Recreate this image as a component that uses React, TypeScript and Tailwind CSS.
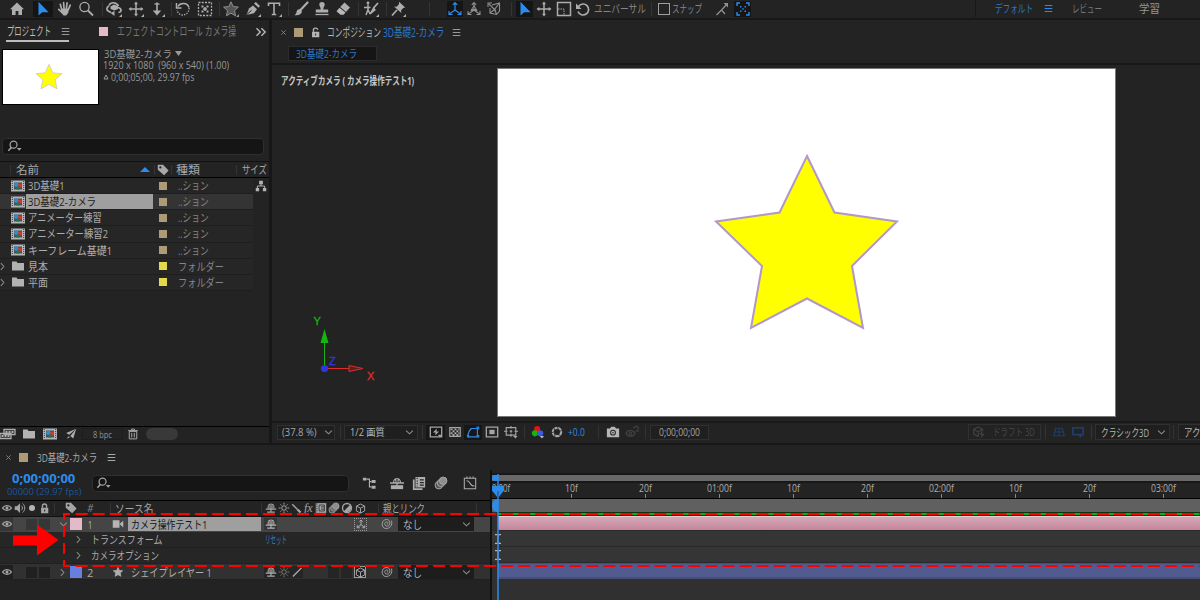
import { useLayoutEffect, useRef, useState, type ReactNode } from "react";
import clsx from "clsx";

const STAR = "8,0.8 10.2,5.6 15.4,6.1 11.5,9.6 12.6,14.8 8,12.2 3.4,14.8 4.5,9.6 0.6,6.1 5.8,5.6";

// Squeezes its text to the width of the box, like the narrow UI font
function Fit({ className, children }: { className: string; children: string }) {
  const inner = useRef<HTMLSpanElement>(null);
  const [scale, setScale] = useState(1);

  useLayoutEffect(() => {
    const el = inner.current;
    if (el && el.parentElement) {
      setScale(el.parentElement.clientWidth / el.offsetWidth);
    }
  }, [children]);

  return (
    <span className={clsx("block shrink-0 leading-none", className)}>
      <span
        ref={inner}
        className="inline-block origin-left whitespace-pre"
        style={{ transform: `scaleX(${scale})` }}
      >
        {children}
      </span>
    </span>
  );
}

function Svg({ className = "size-4", children }: { className?: string; children: ReactNode }) {
  return (
    <svg
      viewBox="0 0 16 16"
      className={clsx("block shrink-0", className)}
      fill="none"
      stroke="currentColor"
      strokeWidth="1.3"
    >
      {children}
    </svg>
  );
}

// A fixed-width slot with its icon centred
function Slot({ className, children }: { className: string; children?: ReactNode }) {
  return <div className={clsx("flex shrink-0 items-center justify-center", className)}>{children}</div>;
}

const Sep = ({ className = "h-3.5" }: { className?: string }) => (
  <div className={clsx("w-px shrink-0 bg-[#343434]", className)} />
);

const Corner = <path d="M16 13v3h-3z" fill="currentColor" stroke="none" />;

const HomeIcon = () => (
  <Svg><path d="M8 1.5 1 8.2h2V14h3.6v-4h2.8v4H13V8.2h2z" fill="currentColor" stroke="none" /></Svg>
);
const PointerIcon = () => (
  <Svg><path d="M3.5.8v13.6l3.7-3.2h6.4z" fill="currentColor" stroke="none" /></Svg>
);
const HandIcon = () => (
  <Svg>
    <path d="M4.6 8.2 3.3 3.3M7 7.2 6.6 1.6M9.4 7.2l.7-5.4M11.4 8.4l1.8-4.3M5 11.5 1.7 8.4" strokeWidth="1.7" strokeLinecap="round" />
    <path d="M4 7.4h8l-.8 4.6-2 2.6H6.6L4 11.5z" fill="currentColor" stroke="none" />
  </Svg>
);
const ZoomIcon = () => (
  <Svg><circle cx="6.5" cy="6" r="4.6" /><path d="m10 9.5 5 5" strokeWidth="1.8" /></Svg>
);
const OrbitIcon = () => (
  <Svg>
    <path d="M12.5 5C10 .5 4.500 1 3 4.500M3 5C-.5 7 .5 10.500 5 11.300M12 6.500c4 1 4 4.300.5 5" strokeWidth="1.7" />
    <path d="m4.500 5.500 3.500-2 4 1.500v3L8.500 9.500 4.500 8z" fill="currentColor" stroke="none" />
    <path d="M8.500 10v5L4.500 12z" fill="currentColor" stroke="none" />
    {Corner}
  </Svg>
);
const MoveIcon = ({ corner = true }: { corner?: boolean }) => (
  <Svg>
    <path d="M8 2v12M2 8h12" strokeWidth="1.5" />
    <path d="m8 .5 2 2.8H6zM8 15.5l2-2.8H6zM.5 8l2.8-2v4zM15.5 8l-2.800-2v4z" fill="currentColor" stroke="none" />
    {corner && Corner}
  </Svg>
);
const DollyIcon = () => (
  <Svg>
    <path d="M8 1.500v10" strokeWidth="1.6" /><path d="M5.500 3h5" />
    <path d="M3.800 9.500h8.400L8 14.500z" fill="currentColor" stroke="none" />
    {Corner}
  </Svg>
);
const RotateDashIcon = () => (
  <Svg>
    <path d="M3 5.500c2-4 9.500-4.300 11 1" strokeWidth="1.6" />
    <path d="M14 7c.3 4-3 7-6 7s-5.500-2-6-5" strokeDasharray="1.3 1.3" />
    <path d="M1.500 2v5h5" strokeWidth="1.5" />
  </Svg>
);
const RegionIcon = () => (
  <Svg>
    <rect x="1.5" y="1.5" width="13" height="13" strokeDasharray="2 1.25" />
    <path d="M8 6v4M6 8h4" strokeWidth="1.5" />
    <path d="M4.500 4.500h2v2h-2zM9.500 4.500h2v2h-2zM4.500 9.500h2v2h-2zM9.500 9.500h2v2h-2z" fill="currentColor" stroke="none" />
  </Svg>
);
const StarToolIcon = () => (
  <Svg><polygon points={STAR} fill="#555" strokeWidth="1" />{Corner}</Svg>
);
const PenIcon = () => (
  <Svg>
    <path d="M1.500 14 4 7.500l4-3 4 3.700-3 4z" fill="currentColor" stroke="none" />
    <path d="m9 2.500 4.500 4.300 1.500-1.800L10.800 1z" fill="currentColor" stroke="none" />
    <path d="m2 13.500 4.500-4.200" stroke="#222" strokeWidth="1" />
    {Corner}
  </Svg>
);
const TypeIcon = () => (
  <Svg><path d="M2.500 5V2.300h11V5M8 2.300v11.200M5.800 13.500h4.400" strokeWidth="1.6" />{Corner}</Svg>
);
const BrushIcon = () => (
  <Svg>
    <path d="m14.500 1.500-7 7.500" strokeWidth="2.2" strokeLinecap="round" />
    <path d="M7.500 8.500C5 7.500 3.500 9.500 3.500 11.500 3 13.500 1.500 14 1 14c4 1 7.500-.5 8-3.500z" fill="currentColor" stroke="none" />
  </Svg>
);
const StampIcon = () => (
  <Svg>
    <path d="M5.300 3.500C5.300.3 10.700.3 10.700 3.500c0 1.700-1.400 2.400-1.400 5h4.900v3H1.800v-3h4.900c0-2.600-1.400-3.300-1.400-5z" fill="currentColor" stroke="none" />
    <path d="M1.500 13.500h13" />
  </Svg>
);
const EraserIcon = () => (
  <Svg>
    <path d="m9.500 1.500 5.500 5-4 4.500L5.200 6z" fill="currentColor" stroke="none" />
    <path d="m4.500 6.800-3 3.400 4 3.600h3l2-2.200z" fill="#b9b9b9" stroke="none" />
  </Svg>
);
const RotoIcon = () => (
  <Svg>
    <circle cx="5" cy="2" r="1.4" fill="currentColor" stroke="none" />
    <path d="M5 3.500v5L3 14M5 8.500 7 13M1 6.500h6.500" strokeWidth="1.5" />
    <path d="m15 2-4.500 5" strokeWidth="1.8" /><path d="m10.500 7-3.500 6 5-4z" fill="currentColor" />
    {Corner}
  </Svg>
);
const PinIcon = () => (
  <Svg>
    <path d="m9 .8 6.200 5.700-2 .5-2.200 2.500.4 2.500L4 5.500l2.700.2L9 3z" fill="currentColor" stroke="none" />
    <path d="m7 9-5 5.500" strokeWidth="1.7" />{Corner}
  </Svg>
);
const AxisIcon = () => (
  <Svg>
    <path d="M8 1.500V9L2.500 13M8 9l5.500 4M5.800 3.800 8 1.500l2.200 2.300M2 10v3.500h3.500M14 10v3.500h-3.500" strokeWidth="1.2" />
  </Svg>
);
const WorldAxisIcon = () => (
  <Svg>
    <path d="M8 1.500V9L2.500 13M8 9l5.500 4M5.800 3.800 8 1.500l2.200 2.300M2 10v3.500h3.500M14 10v3.500h-3.500M5 8.500h6" strokeWidth="1.1" />
    <path d="m8 4.500-3 5h6z" strokeWidth="1" />
  </Svg>
);
const ViewAxisIcon = () => (
  <Svg><path d="m3 3 7 7M2 6V2h4M6 4l7.500-2v8l-3 3.500L4 12V7M13 2.500 8.500 8.500l2 4.500M4 12l4.500-3.500" strokeWidth="1.1" /></Svg>
);
const ScaleIcon = () => (
  <Svg><rect x="1.5" y="1.5" width="13" height="13" strokeWidth="1.5" /><path d="M2 8h6v6" strokeDasharray="1.5 1" strokeWidth="1" /></Svg>
);
const UndoIcon = () => (
  <Svg><path d="M3.500 5.500A5.500 5.500 0 1 1 3 10.500" strokeWidth="1.7" /><path d="M1 2.500V8h5.500z" fill="currentColor" stroke="none" /></Svg>
);
const SnapEdgeIcon = () => (
  <Svg><path d="m2.500 14 5-5 3.500 4M8 8.500l5.500-6" /><path d="M9.500 2H14v4.500z" fill="currentColor" stroke="none" /></Svg>
);
const FocusIcon = () => (
  <Svg>
    <path d="M2 5V2h3M11 2h3v3M14 11v3h-3M5 14H2v-3" strokeWidth="1.4" />
    <path d="M5 5h1.500v1.500H5zM9.500 5H11v1.500H9.500zM5 9.500h1.500V11H5zM9.500 9.500H11V11H9.500zM7.300 7.300h1.400v1.400H7.300z" fill="currentColor" stroke="none" />
  </Svg>
);

const MenuIcon = () => (
  <Svg className="size-[11px]"><path d="M2.500 3.500h11M2.500 8h11M2.500 12.500h11" strokeWidth="1.5" /></Svg>
);
const CloseIcon = () => <Svg className="size-[7px]"><path d="m3 3 10 10M13 3 3 13" strokeWidth="2" /></Svg>;
const ChevronDown = () => <Svg className="size-[9px] text-[#8f8f8f]"><path d="m2 4.500 6 6 6-6" strokeWidth="1.8" /></Svg>;
const ChevronRight = () => <Svg className="size-[9px] text-[#8a8a8a]"><path d="m5 2 5.500 6L5 14" strokeWidth="1.8" /></Svg>;

const SearchIcon = () => (
  <Svg className="size-[15px]">
    <circle cx="7" cy="6" r="3.7" /><path d="m4.500 9-3 3.500" strokeWidth="1.6" />
    <path d="M10.500 9.500h5L13 12.500z" fill="currentColor" stroke="none" />
  </Svg>
);
const TagIcon = () => (
  <Svg className="size-3"><path fillRule="evenodd" d="M1 1h7l7.500 7.500-6 6.500L1 7.500zM4.500 3a1.500 1.500 0 1 0 0 3 1.500 1.500 0 0 0 0-3z" fill="currentColor" stroke="none" /></Svg>
);
const CompIcon = () => (
  <svg viewBox="0 0 14 12" className="block h-3 w-3.5 shrink-0">
    <path d="M0 .5h14v11H0z" fill="#b5b5b5" />
    <path d="M1.300 1v10M12.700 1v10" stroke="#333" strokeDasharray="1 1" />
    <path d="M3 2.500h8v7H3z" fill="#4b5158" />
    <circle cx="5.300" cy="4.800" r="2.200" fill="#2b8fd8" />
    <circle cx="9" cy="5.600" r="2.100" fill="#d93434" />
    <path d="M5.500 6.500h3v3h-3z" fill="#1f7a3c" />
  </svg>
);
const FolderIcon = () => (
  <svg viewBox="0 0 14 12" className="block h-3 w-3.5 shrink-0"><path d="M1 1.500h4.500l1 1.500H13v7.500H1z" fill="#b2b2b2" /></svg>
);
const FlowIcon = () => (
  <Svg className="size-3">
    <path d="M5.500 1h5v4.500h-5zM1 10.500h4.500V15H1zM10.500 10.500H15V15h-4.500z" fill="currentColor" stroke="none" />
    <path d="M8 5v3M3.200 11V8h9.600v3" />
  </Svg>
);
const EyeIcon = () => (
  <svg viewBox="0 0 12 10" className="block h-2.5 w-3 shrink-0">
    <path d="M1.500 5C3.500 1.800 8.500 1.800 10.500 5 8.500 8.200 3.500 8.200 1.500 5z" fill="none" stroke="#a8a8a8" strokeWidth="1.3" />
    <circle cx="6" cy="5" r="1.500" fill="#a8a8a8" />
  </svg>
);
const SpeakerIcon = () => (
  <Svg className="size-3">
    <path d="M1 5.500h3L8 1.500v13l-4-4H1z" fill="currentColor" stroke="none" />
    <path d="M10 5c1.600 1.600 1.600 4.400 0 6M11.500 2c3.800 3 3.800 9 0 12" />
  </Svg>
);
const LockIcon = ({ open = false }: { open?: boolean }) => (
  <Svg className="size-[11px]">
    <path d={open ? "M5 7V4c0-3 6-3.500 6 0" : "M5 7V4.500c0-4 6-4 6 0V7"} strokeWidth="2" />
    <path fillRule="evenodd" d="M3 7h10.500v8H3zM7.500 9.500v3H9v-3z" fill="currentColor" stroke="none" />
  </Svg>
);
const ShyIcon = () => (
  <Svg className="size-3">
    <path d="M3.500 8.500V6C3.500.5 12.500.5 12.500 6v2.500z" fill="currentColor" stroke="none" />
    <path d="M8 2v11M5.500 4v4M10.500 4v4" stroke="#2a2a2a" strokeWidth="1" />
    <path d="M1 9.500h14M8 8v6M3 13.500h10" strokeWidth="1.5" />
  </Svg>
);
const SunIcon = () => (
  <Svg className="size-3"><circle cx="8" cy="8" r="3" /><path d="M8 1v2.500M8 12.500V15M1 8h2.500M12.500 8H15M3.200 3.200l1.500 1.500M11.300 11.300l1.500 1.500M12.800 3.200l-1.500 1.500M4.700 11.300l-1.500 1.500" /></Svg>
);
const FilmIcon = () => (
  <Svg className="size-3">
    <path d="M1 1.500h14v13H1z" fill="currentColor" stroke="none" /><path d="M2.500 2v12" stroke="#2a2a2a" strokeDasharray="1.5 1.5" />
    <path d="M5.500 4h7v8h-7zM8 6.500h4M8 9.500h4" stroke="#2a2a2a" strokeWidth="1.1" />
  </Svg>
);
const BlurIcon = ({ className = "size-3" }: { className?: string }) => (
  <Svg className={className}>
    <circle cx="5.500" cy="10.500" r="4.300" fill="#555" strokeWidth="1" /><circle cx="8" cy="8" r="4.300" fill="#666" strokeWidth="1" />
    <circle cx="10.500" cy="5.500" r="4.300" fill="#8d8d8d" strokeWidth="1" />
  </Svg>
);
const HalfIcon = () => (
  <Svg className="size-3"><circle cx="8" cy="8" r="6" strokeWidth="1.8" /><path d="M12.200 3.800a6 6 0 0 1-8.400 8.400z" fill="currentColor" stroke="none" /></Svg>
);
const CubeIcon = () => (
  <Svg className="size-[11px]"><path d="m8 1.500 6 3v7l-6 3.200-6-3.200v-7zM2 4.500l6 3 6-3M8 7.500v7" strokeWidth="1.4" /></Svg>
);
const SpiralIcon = () => (
  <Svg className="size-3 text-[#a5a5a5]"><path d="M14 3.500c1.500 6-2 10.500-7 10.500-7 0-7.500-11 0-12 6-.5 6.500 8.500 1.200 8.800-3.800 0-4.200-5-1-5.600 2.500-.2 2.800 2.800 1 3" strokeWidth="1.3" /></Svg>
);
const CameraIcon = () => (
  <Svg className="size-3"><path d="M1 3h9v10H1zM10 8l5-4.500v9z" fill="currentColor" stroke="none" /></Svg>
);

function Toolbar() {
  return (
    <header className="flex h-5 shrink-0 items-center overflow-hidden border-b-2 border-[#181818] pb-px text-[#adadad]">
      <Slot className="w-[33px]"><HomeIcon /></Slot>
      <Slot className="h-4 w-5 bg-[#151515] text-[#2d8ceb]"><PointerIcon /></Slot>
      <Slot className="w-[23px]"><HandIcon /></Slot>
      <Slot className="w-5"><ZoomIcon /></Slot>
      <Slot className="w-1.5" /><Sep />
      <Slot className="w-[21px]"><OrbitIcon /></Slot>
      <Slot className="w-[23px]"><MoveIcon /></Slot>
      <Slot className="w-[20px]"><DollyIcon /></Slot>
      <Slot className="w-1" /><Sep />
      <Slot className="w-[22px]"><RotateDashIcon /></Slot>
      <Slot className="w-[21px]"><RegionIcon /></Slot>
      <Slot className="w-1" /><Sep />
      <Slot className="w-[22px] text-[#8f8f8f]"><StarToolIcon /></Slot>
      <Slot className="w-[21px]"><PenIcon /></Slot>
      <Slot className="w-[21px]"><TypeIcon /></Slot>
      <Slot className="w-1" /><Sep />
      <Slot className="w-[23px]"><BrushIcon /></Slot>
      <Slot className="w-[20px]"><StampIcon /></Slot>
      <Slot className="w-[22px]"><EraserIcon /></Slot>
      <Slot className="w-1" /><Sep />
      <Slot className="w-[24px]"><RotoIcon /></Slot>
      <Slot className="w-[3px]" /><Sep />
      <Slot className="w-[21px]"><PinIcon /></Slot>
      <Slot className="w-[21px]" /><Sep />
      <Slot className="w-[17px]" />
      <Slot className="h-4 w-4 bg-[#151515] text-[#2d8ceb]"><AxisIcon /></Slot>
      <Slot className="w-[22px] text-[#8f8f8f]"><WorldAxisIcon /></Slot>
      <Slot className="w-[18px] text-[#8f8f8f]"><ViewAxisIcon /></Slot>
      <Slot className="w-[8px]" /><Sep /><Slot className="w-[4px]" />
      <Slot className="h-4 w-[17px] bg-[#151515] text-[#2d8ceb]"><PointerIcon /></Slot>
      <Slot className="w-[21px]"><MoveIcon corner={false} /></Slot>
      <Slot className="w-[19px]"><ScaleIcon /></Slot>
      <Slot className="w-[20px]"><UndoIcon /></Slot>
      <Fit className="ml-px w-[52px] text-[11px] text-[#858585]">ユニバーサル</Fit>
      <Slot className="w-[5px]" /><Sep />
      <div className="ml-[6px] size-3 shrink-0 border border-[#a0a0a0]" />
      <Fit className="ml-[2px] w-[30px] text-[11px] text-[#858585]">スナップ</Fit>
      <Slot className="ml-[12px] w-[16px] text-[#8f8f8f]"><SnapEdgeIcon /></Slot>
      <Slot className="ml-1 h-4 w-[17px] bg-[#151515] text-[#2d8ceb]"><FocusIcon /></Slot>
      <div className="flex-1" />
      <div className="flex h-full w-[225px] shrink-0 items-center border-l border-[#181818]">
        <Fit className="ml-[19px] w-[38px] text-[11px] text-[#2a78c8]">デフォルト</Fit>
        <Slot className="ml-[9px] w-3 text-[#2d8ceb]"><MenuIcon /></Slot>
        <Fit className="ml-[18px] w-[30px] text-[11px] text-[#777]">レビュー</Fit>
        <Fit className="ml-[37px] w-[21px] text-[11px] text-[#959595]">学習</Fit>
      </div>
    </header>
  );
}

const projectItems = [
  { name: "3D基礎1", width: "w-[37px]", folder: false },
  { name: "3D基礎2-カメラ", width: "w-[68px]", folder: false, selected: true },
  { name: "アニメーター練習", width: "w-[74px]", folder: false },
  { name: "アニメーター練習2", width: "w-[80px]", folder: false },
  { name: "キーフレーム基礎1", width: "w-[84px]", folder: false },
  { name: "見本", width: "w-[20px]", folder: true },
  { name: "平面", width: "w-[20px]", folder: true },
];

function ProjectPanel() {
  return (
    <section className="flex w-[269px] shrink-0 flex-col overflow-hidden">
      <div className="flex h-[22px] shrink-0">
        <div className="ml-1.5 flex w-[63px] shrink-0 items-center border-b-2 border-[#bdbdbd] pt-[3px] text-[#bdbdbd]">
          <Fit className="ml-px w-[44px] text-[12px]">プロジェクト</Fit>
          <Slot className="ml-2 w-3 text-[#999]"><MenuIcon /></Slot>
        </div>
        <div className="flex items-center pt-px">
          <div className="ml-[30px] size-[9px] bg-[#e4b9c9]" />
          <Fit className="ml-[9px] w-[119px] text-[12px] text-[#777]">エフェクトコントロール カメラ操</Fit>
          <Slot className="ml-[19px] w-3 text-[#b5b5b5]">
            <Svg className="size-3"><path d="m2 3 5 5-5 5M8.500 3l5 5-5 5" strokeWidth="2" /></Svg>
          </Slot>
        </div>
      </div>
      <div className="mt-[7px] ml-0.5 flex h-[56px] shrink-0">
        <div className="flex h-[56px] w-[97px] items-center justify-center border border-black bg-white">
          <svg viewBox="0 0 16 16" className="mr-[3px] size-7"><polygon points={STAR} fill="#ff0" stroke="#c8bcd8" strokeWidth=".4" /></svg>
        </div>
        <div className="-mt-px ml-[5px] text-[10px] text-[#989898]">
          <div className="flex h-[11px] items-center">
            <Fit className="w-[68px]">3D基礎2-カメラ</Fit>
            <svg viewBox="0 0 8 6" className="ml-[3px] h-1.5 w-2"><path d="M0 0h7L3.500 5z" fill="currentColor" /></svg>
          </div>
          <div className="flex h-[12px] items-center">
            <Fit className="-ml-px w-[126px]">1920 x 1080  (960 x 540) (1.00)</Fit>
          </div>
          <div className="flex h-[11px] items-center">
            <svg viewBox="0 0 6 6" className="-ml-px size-1.5"><path d="M3 1 5 5H1z" fill="none" stroke="currentColor" /></svg>
            <Fit className="ml-[2px] w-[83px]">0;00;05;00, 29.97 fps</Fit>
          </div>
        </div>
      </div>
      <div className="mt-[33px] ml-[2px] flex h-[17px] w-[262px] shrink-0 items-center rounded-sm border border-[#2f2f2f] bg-[#151515] pl-[4px] text-[#a5a5a5]">
        <SearchIcon />
      </div>
      <div className="mt-[6px] flex h-[17px] shrink-0 items-center border-t border-b border-t-[#111] border-b-black text-[#a8a8a8]">
        <div className="w-2.5 shrink-0" /><Sep className="h-2.5" />
        <Fit className="ml-[5px] w-[23px] text-[11px]">名前</Fit>
        <svg viewBox="0 0 10 5" className="ml-[101px] h-[5px] w-2.5 shrink-0"><path d="M0 5 5 0l5 5z" fill="#2d8ceb" /></svg>
        <div className="w-[4px] shrink-0" /><Sep className="h-2.5" />
        <Slot className="w-[16px]"><TagIcon /></Slot><Sep className="h-2.5" />
        <Fit className="ml-1 w-[24px] text-[11px]">種類</Fit>
        <div className="w-9 shrink-0" /><Sep className="h-2.5" />
        <Fit className="ml-[5px] w-[25px] text-[11px]">サイズ</Fit>
      </div>
      <div className="flex shrink-0">
        <ul className="w-[253px] text-[11px] text-[#adadad]">
          {projectItems.map((item) => (
            <li
              key={item.name}
              className={clsx("flex h-[16.15px] items-center border-b border-[#1e1e1e]", item.selected ? "bg-[#343434]" : "bg-[#262626]")}
            >
              <Slot className="w-[9px] pr-1">{item.folder && <ChevronRight />}</Slot>
              <Slot className="w-[17px]">{item.folder ? <FolderIcon /> : <CompIcon />}</Slot>
              <div className={clsx("flex h-full w-[127px] items-center pl-0.5", item.selected && "bg-[#9f9f9f] text-[#1c1c1c]")}>
                <Fit className={item.width}>{item.name}</Fit>
              </div>
              <div className={clsx("ml-[6px] size-2", item.folder ? "bg-[#e4d94d]" : "bg-[#ac9a78]")} />
              <Fit className={clsx("ml-[11px] text-[#858585]", item.folder ? "w-[46px]" : "w-[31px]")}>
                {item.folder ? "フォルダー" : "..ション"}
              </Fit>
            </li>
          ))}
        </ul>
        <Slot className="h-4 w-[15px] text-[#b5b5b5]"><FlowIcon /></Slot>
      </div>
      <div className="flex-1" />
      <div className="flex h-[15px] shrink-0 items-center border-t border-black text-[#adadad]">
        <Slot className="w-4">
          <Svg><path d="M4 3.500h11v5H4zM0 7.500h11v5H0z" fill="#242424" /><path d="M5.500 6h8M1.500 10h8" strokeDasharray="2 1" strokeWidth="2" /></Svg>
        </Slot>
        <Slot className="w-[25px]"><FolderIcon /></Slot>
        <Slot className="w-[18px]"><CompIcon /></Slot>
        <Slot className="w-[23px]">
          <Svg className="size-3"><path d="M15 1 1.500 6.500l4 2.500zM15 1 7 10.500l4 3.500zM5.500 10.500 2 14l4-1z" fill="currentColor" stroke="none" /></Svg>
        </Slot>
        <Slot className="h-3 w-[41px] border border-[#1d1d1d]"><Fit className="w-[19px] text-[9px] text-[#909090]">8 bpc</Fit></Slot>
        <Slot className="w-5">
          <Svg className="size-3"><path d="M3 4.500h10v10H3zM1.500 3.500h13M6 3V1.500h4V3M6.300 6.500v6M9.700 6.500v6" /></Svg>
        </Slot>
        <div className="ml-[3px] h-[12px] w-8 rounded-full bg-[#393939]" />
      </div>
      <div className="h-[2px] shrink-0" />
    </section>
  );
}

function CompositionPanel() {
  return (
    <section className="flex min-w-0 flex-1 flex-col overflow-hidden border-l-[3px] border-[#171717]">
      <div className="flex h-[24px] shrink-0 items-center pt-px text-[#b5b5b5]">
        <Slot className="ml-[7px] w-2 text-[#888]"><CloseIcon /></Slot>
        <div className="ml-[7px] size-[9px] bg-[#ac9a78]" />
        <Slot className="ml-[7px] w-[11px]"><LockIcon open /></Slot>
        <Fit className="ml-[6px] w-[54px] text-[12px]">コンポジション</Fit>
        <Fit className="ml-[2px] w-[61px] text-[12px] text-[#2a78c8]">3D基礎2-カメラ</Fit>
        <Slot className="ml-[6px] w-3 text-[#999]"><MenuIcon /></Slot>
      </div>
      <div className="flex h-[21px] shrink-0 border-b-2 border-[#181818] pt-[2px]">
        <div className="ml-[16px] flex h-[15px] w-[89px] items-center border border-[#2c2c2c] bg-[#151515]">
          <Fit className="ml-[7px] w-[61px] text-[11px] text-[#2a78c8]">3D基礎2-カメラ</Fit>
        </div>
      </div>
      <div className="flex min-h-0 flex-1">
        <div className="flex w-[226px] shrink-0 flex-col">
          <Fit className="mt-[10px] ml-[9px] h-3 w-[133px] text-[11px] font-bold text-[#c6c6c6]">アクティブカメラ ( カメラ操作テスト1)</Fit>
          <svg viewBox="0 0 74 74" className="mt-[227px] ml-[36px] size-[74px] font-['Liberation_Sans'] text-[11px]">
            <path d="M16.500 55V28" stroke="#16b50d" />
            <path d="m16.500 15 4 14h-8z" fill="#16b50d" />
            <path d="M17 54.500h25" stroke="#e02c2c" />
            <path d="m41 51.500 14 3-14 3z" fill="#5c2020" stroke="#e02c2c" />
            <circle cx="16.500" cy="54.500" r="3.600" fill="#3038dd" />
            <text x="5.500" y="11" fill="#16b50d" stroke="#16b50d" strokeWidth=".3">Y</text>
            <text x="21" y="50.500" fill="#3038dd" stroke="#3038dd" strokeWidth=".3">Z</text>
            <text x="59" y="66" fill="#e02c2c" stroke="#e02c2c" strokeWidth=".3">X</text>
          </svg>
        </div>
        <div className="mt-[4px] h-[347px] w-[617px] shrink-0 bg-white outline outline-[#777]">
          <svg viewBox="498 69 617 347" className="block size-full">
            <polygon
              points="807,156 834.5,212.5 897,221.5 852,266 863,328 807,298.5 751,328 762,266 716,221.5 779.5,212.5"
              fill="#ff0"
              stroke="#b197cb"
              strokeWidth="2"
            />
          </svg>
        </div>
      </div>
      <div className="flex h-[22px] shrink-0 items-center border-t-2 border-[#1a1a1a] pb-[2px] pl-[5px] text-[#a5a5a5]">
        <div className="flex h-[15px] w-[58px] shrink-0 items-center border border-[#303030] bg-[#1f1f1f]">
          <Fit className="ml-1 w-[35px] text-[10px]">(37.8 %)</Fit>
          <Slot className="ml-[6px] w-2.5"><ChevronDown /></Slot>
        </div>
        <div className="w-[5px] shrink-0" /><Sep /><div className="w-[3px] shrink-0" />
        <div className="flex h-[15px] w-[74px] shrink-0 items-center border border-[#303030] bg-[#1f1f1f]">
          <Fit className="ml-[5px] w-[35px] text-[10px] text-[#b5b5b5]">1/2 画質</Fit>
          <Slot className="ml-[19px] w-2.5"><ChevronDown /></Slot>
        </div>
        <div className="w-[4px] shrink-0" /><Sep /><div className="w-[3px] shrink-0" />
        <Slot className="h-[15px] w-[19px] bg-[#171717]">
          <Svg className="size-3.5"><path d="M1.500 2.500h13v11h-13z" strokeWidth="1.5" /><path d="M9 4 4.500 8.500h3L7 12l4.500-4.500h-3zM10 11h5l-2.500 3z" fill="currentColor" stroke="none" /></Svg>
        </Slot>
        <Slot className="w-[19px]">
          <Svg className="size-3.5"><path d="M2 3h12v10H2z" strokeWidth="1.3" /><path d="M3 5h10M3 9.500h10" strokeDasharray="2.2 2.2" strokeWidth="2.2" /><path d="M5.200 7.200H13M5.200 11.500H13" strokeDasharray="2.2 2.2" strokeWidth="2.2" /></Svg>
        </Slot>
        <Slot className="h-[15px] w-[18px] bg-[#171717] text-[#2d8ceb]">
          <Svg className="size-3.5"><path d="M2 13.500C2.500 8 4 5.500 6.500 4H13v9.500zM5 4h2M12 2.500h2.500V5M1 12h2v2.500M12 12h2.500v2.500" strokeWidth="1.3" /></Svg>
        </Slot>
        <Slot className="w-[19px]">
          <Svg className="size-3.5"><path d="M1.500 2.500h13v11h-13z" strokeWidth="1.5" /><path d="M5 5.500h6v5H5z" fill="currentColor" stroke="none" /></Svg>
        </Slot>
        <Slot className="w-[19px]">
          <Svg className="size-3.5"><path d="M2.500 3h11v8.500h-11zM8 1v3M8 10v3.500M6.500 7.200h3M8 5.800v3M0 7.200h4M12 7.200h4" /><path d="M10.500 12.500h5l-2.500 3z" fill="currentColor" stroke="none" /></Svg>
        </Slot>
        <div className="w-[4px] shrink-0" /><Sep /><div className="w-[4px] shrink-0" />
        <Slot className="w-[18px]">
          <Svg className="size-3.5">
            <g stroke="none"><circle cx="7" cy="4.500" r="3.500" fill="#ee1111" /><circle cx="4.500" cy="9.500" r="3.500" fill="#14b414" /><circle cx="10.500" cy="9.500" r="3.500" fill="#3a5ae0" /><path d="M10 12.500h5l-2.500 3z" fill="#b5b5b5" /></g>
          </Svg>
        </Slot>
        <Slot className="w-[20px]">
          <Svg className="size-3"><circle cx="8" cy="8" r="5.500" strokeWidth="3" /><path d="m8 1 3 5M14.500 6 9 8M13 13l-5-2.500M5 15v-5M1 9l5-2M4 2l1 5" stroke="#222" strokeWidth="1" /></Svg>
        </Slot>
        <Fit className="ml-px w-[17px] text-[10px] text-[#2d8ceb]">+0.0</Fit>
        <div className="w-[13px] shrink-0" /><Sep /><div className="w-[4px] shrink-0" />
        <Slot className="w-[20px] text-[#b5b5b5]">
          <Svg className="size-3.5"><path fillRule="evenodd" d="M1 4h3.500L6 2h4l1.500 2H15v10H1zM8 5.500a3.300 3.300 0 1 0 0 6.600 3.300 3.300 0 0 0 0-6.600z" fill="currentColor" stroke="none" /><circle cx="8" cy="8.800" r="1.500" /></Svg>
        </Slot>
        <Slot className="w-[18px] text-[#404040]">
          <Svg className="size-3.5"><path d="M1 9.500c2.500-4.500 8-4.500 10.500 0-2.500 4.500-8 4.500-10.500 0zM9 3h2l1-1.500h2L15 3v4h-3" strokeWidth="1.5" /><circle cx="6.200" cy="9.500" r="1.500" /></Svg>
        </Slot>
        <div className="w-[4px] shrink-0" /><Sep /><div className="w-[4px] shrink-0" />
        <Slot className="h-[15px] w-[59px] border border-[#303030] bg-[#1f1f1f]"><Fit className="w-[41px] text-[10px]">0;00;00;00</Fit></Slot>
        <div className="flex-1" />
        <div className="flex h-[16px] w-[73px] shrink-0 items-center border border-[#303030] text-[#464646]">
          <Slot className="ml-1 w-3">
            <Svg className="size-3"><path d="M13 6V4.500l-6-3-6 3v6.500l6 3M1 4.500l6 3 6-3M7 7.500V14M12.500 7 10 11h4l-3 4" strokeWidth="1.4" /></Svg>
          </Slot>
          <Fit className="ml-[8px] w-[42px] text-[10px]">ドラフト 3D</Fit>
        </div>
        <div className="w-1 shrink-0" /><Sep />
        <Slot className="ml-[7px] w-3 text-[#1f3d66]">
          <Svg className="size-3"><path d="M3.500 3h9L15 13H1zM2 8h12M8 3v10" strokeWidth="1.6" /></Svg>
        </Slot>
        <Slot className="ml-[7px] w-3 text-[#1f3d66]">
          <Svg className="size-3"><path d="M1 2.500h14v9H1z" strokeWidth="2.5" /><path d="M8 12h6l-3 4z" fill="currentColor" stroke="none" /></Svg>
        </Slot>
        <div className="w-[7px] shrink-0" /><Sep /><div className="w-[3px] shrink-0" />
        <div className="flex h-[16px] w-[75px] shrink-0 items-center border border-[#303030] bg-[#1f1f1f] text-[#b5b5b5]">
          <Fit className="ml-[5px] w-[48px] text-[11px]">クラシック3D</Fit>
          <Slot className="ml-[7px] w-2.5"><ChevronDown /></Slot>
        </div>
        <div className="w-[3px] shrink-0" /><Sep /><div className="w-[4px] shrink-0" />
        <div className="flex h-[16px] w-[22px] shrink-0 items-center border-y border-l border-[#303030] bg-[#1f1f1f] text-[#b5b5b5]">
          <Fit className="ml-[5px] w-[16px] text-[11px]">アク</Fit>
        </div>
      </div>
    </section>
  );
}

function ParentPicker() {
  return (
    <>
      <Slot className="w-[23px]"><SpiralIcon /></Slot>
      <div className="flex h-[14px] w-[76px] shrink-0 items-center bg-[#1d1d1d] text-[#b0b0b0]">
        <Fit className="ml-[5px] w-[19px] text-[11px]">なし</Fit>
        <Slot className="ml-[39px] w-2.5"><ChevronDown /></Slot>
      </div>
    </>
  );
}

function LayerHead({ dark }: { dark: boolean }) {
  const box = dark ? "bg-[#202020]" : "bg-[#363636]";
  return (
    <>
      <Slot className={clsx("h-3.5 w-[13px]", box)}><EyeIcon /></Slot>
      <div className="w-[13px] shrink-0" />
      <div className={clsx("h-[11px] w-[11px] shrink-0", box)} />
      <div className={clsx("ml-0.5 h-[11px] w-[11px] shrink-0", box)} />
    </>
  );
}

const ticks = ["10f", "20f", "01:00f", "10f", "20f", "02:00f", "10f", "20f", "03:00f"];

const KeyMark = () => (
  <svg viewBox="0 0 6 10" className="ml-[3px] h-2.5 w-1.5"><path d="M0 .5h6M0 9.500h6M3 1v8" stroke="#b5b5b5" strokeWidth="1.3" /></svg>
);

function Timeline() {
  return (
    <section className="relative flex h-[157px] shrink-0 flex-col border-t-2 border-[#171717]">
      <div className="flex h-[25px] shrink-0 items-center text-[#a8a8a8]">
        <Slot className="ml-[4px] w-2 text-[#888]"><CloseIcon /></Slot>
        <div className="ml-[7px] size-[9px] bg-[#ac9a78]" />
        <Fit className="ml-[9px] w-[60px] text-[11px]">3D基礎2-カメラ</Fit>
        <Slot className="ml-[8px] w-3"><MenuIcon /></Slot>
      </div>
      <div className="flex min-h-0 flex-1">
        <div className="flex w-[492px] shrink-0 flex-col border-r-2 border-[#111]">
          <div className="flex h-[31px] shrink-0 border-b border-black pt-[1px]">
            <div className="flex w-[92px] shrink-0 flex-col">
              <Fit className="mt-[2px] ml-3 w-[63px] text-[12px] font-bold text-[#2d8ceb]">0;00;00;00</Fit>
              <Fit className="mt-[2px] ml-[7px] w-[75px] text-[9px] text-[#1c5596]">00000 (29.97 fps)</Fit>
            </div>
            <div className="mt-[4px] flex h-[17px] w-[257px] shrink-0 items-center rounded-sm border border-[#2f2f2f] bg-[#151515] pl-[3px] text-[#a5a5a5]">
              <SearchIcon />
            </div>
            <div className="mt-[4px] ml-[12px] flex h-4 items-center text-[#adadad]">
              <Slot className="w-4">
                <Svg className="size-3.5"><path d="M1 2h4v3H1zM11 4.500h4.500V8H11zM11 11h4.500v3.500H11z" fill="currentColor" stroke="none" /><path d="M5 3.500h3.500v9H11M8.500 6.500H11" /></Svg>
              </Slot>
              <Slot className="ml-[12px] w-4">
                <Svg className="size-3.5"><path d="M3.500 8C3 .5 13 .5 12.500 8z" fill="currentColor" stroke="none" /><path d="M8 3v6M5.500 5v3M10.500 5v3" stroke="#222" /><path d="M0 8h16M8 8v3" strokeWidth="1.5" /><path d="M1 10.500h14V15H1z" fill="currentColor" stroke="none" /></Svg>
              </Slot>
              <Slot className="ml-[6px] w-4">
                <Svg className="size-3.5"><path d="M1 4h2v10h9v2H1zM4 1h11v12H4z" fill="currentColor" stroke="none" /><path d="M6 2v10" stroke="#222" strokeDasharray="1.5 1.5" /><path d="M9 4.500h4.500M9 7.500h4.500M9 10.500h4.500" stroke="#222" /></Svg>
              </Slot>
              <Slot className="ml-[6px] w-4"><BlurIcon className="size-3.5" /></Slot>
              <Slot className="ml-[13px] w-4">
                <Svg className="size-3.5"><path d="M1.500 2.500h13v12h-13zM4 5.500c5-.5 3 6 9 6M4.500.5v2.500M8 .5v2.500M11.500.5v2.500" strokeWidth="1.2" /></Svg>
              </Slot>
            </div>
          </div>
          <div className="flex h-[15px] shrink-0 items-center pb-px text-[#a5a5a5]">
            <Slot className="w-[13px]"><EyeIcon /></Slot>
            <Slot className="w-[13px]"><SpeakerIcon /></Slot>
            <Slot className="w-3"><div className="size-1.5 rounded-full bg-[#b5b5b5]" /></Slot>
            <Slot className="w-[13px]"><LockIcon /></Slot>
            <div className="w-[3px] shrink-0" /><Sep className="h-2.5" />
            <Slot className="ml-[9px] w-3.5"><TagIcon /></Slot>
            <Fit className="ml-[9px] w-[6px] text-[10px] text-[#858585] italic">#</Fit>
            <div className="w-[17px] shrink-0" /><Sep className="h-2.5" />
            <Fit className="ml-[4px] w-[38px] text-[11px]">ソース名</Fit>
            <div className="w-[108px] shrink-0" /><Sep className="h-2.5" />
            <Slot className="ml-[2px] w-[13px]"><ShyIcon /></Slot>
            <Slot className="w-[13px]"><SunIcon /></Slot>
            <Slot className="w-[12px]"><Svg className="size-3"><path d="m3 3 7 7" strokeWidth="1.8" /><path d="m10 10 4 4" strokeWidth="3" /></Svg></Slot>
            <Fit className="ml-[2px] w-[9px] font-['Liberation_Serif'] text-[12px] italic">fx</Fit>
            <div className="w-px shrink-0" />
            <Slot className="w-[13px]"><FilmIcon /></Slot>
            <Slot className="w-[14px]"><BlurIcon /></Slot>
            <Slot className="w-[12px]"><HalfIcon /></Slot>
            <Slot className="ml-px w-[12px]"><CubeIcon /></Slot>
            <div className="w-[12px] shrink-0" /><Sep className="h-2.5" />
            <Fit className="ml-[4px] w-[42px] text-[11px]">親とリンク</Fit>
            <div className="w-[51px] shrink-0" /><Sep className="h-2.5" />
          </div>
          <div className="flex h-4 shrink-0 items-center border-t border-[#111] bg-[#454545] pb-px text-[#b5b5b5]">
            <LayerHead dark={false} />
            <Slot className="ml-[8px] w-[11px]"><ChevronDown /></Slot>
            <div className="ml-px h-3 w-3 shrink-0 bg-[#e4b9c9]" />
            <Fit className="ml-[6px] w-[4px] text-[11px]">1</Fit>
            <Slot className="ml-[20px] w-3"><CameraIcon /></Slot>
            <div className="ml-[4px] flex h-full w-[133px] shrink-0 items-center bg-[#9f9f9f] pl-[3px] text-[#151515]">
              <Fit className="w-[76px] text-[11px]">カメラ操作テスト1</Fit>
            </div>
            <Slot className="ml-[3px] w-[13px] bg-[#363636]"><ShyIcon /></Slot>
            <Slot className="ml-[77px] size-[13px] border border-dotted border-[#999]">
              <Svg className="size-2.5"><path d="M8 2v7l-5 4M8 9l5 4M5.500 4 8 2l2.500 2M2 10v4h4M14 10v4h-4" strokeWidth="1.5" /></Svg>
            </Slot>
            <div className="w-[8px] shrink-0" />
            <ParentPicker />
          </div>
          {["トランスフォーム", "カメラオプション"].map((label, i) => (
            <div key={label} className="flex h-4 shrink-0 items-center border-b border-[#202020] bg-[#262626] text-[#a8a8a8]">
              <Slot className="ml-[72px] w-3"><ChevronRight /></Slot>
              <Fit className={clsx("ml-[7px] text-[11px]", i === 0 ? "w-[71px]" : "w-[68px]")}>{label}</Fit>
              {i === 0 && <Fit className="ml-[103px] w-[22px] text-[11px] text-[#2d7cd0]">リセット</Fit>}
            </div>
          ))}
          <div className="flex h-4 shrink-0 items-center border-b border-[#202020] bg-[#313131] pt-px text-[#adadad]">
            <LayerHead dark />
            <Slot className="ml-[6px] w-[12px]"><ChevronRight /></Slot>
            <div className="ml-[2px] h-3 w-3 shrink-0 bg-[#6780df]" />
            <Fit className="ml-[5px] w-[6px] text-[11px]">2</Fit>
            <Slot className="ml-[19px] w-3"><Svg className="size-2.5"><polygon points={STAR} fill="currentColor" /></Svg></Slot>
            <Fit className="ml-[7px] w-[81px] text-[11px]">シェイプレイヤー 1</Fit>
            <Slot className="ml-[52px] w-[13px] bg-[#252525]"><ShyIcon /></Slot>
            <Slot className="w-[13px] bg-[#252525] text-[#777]"><SunIcon /></Slot>
            <Slot className="h-3 w-[13px] bg-[#252525]"><Svg className="size-3"><path d="M2.500 14 14 2.500" strokeWidth="1.8" /></Svg></Slot>
            <div className="ml-[25px] h-3 w-[11px] shrink-0 bg-[#252525]" />
            <div className="ml-0.5 h-3 w-[11px] shrink-0 bg-[#252525]" />
            <Slot className="ml-[2px] size-[12px] border border-[#999] bg-[#202020]"><CubeIcon /></Slot>
            <div className="w-[9px] shrink-0" />
            <ParentPicker />
          </div>
        </div>
        <div className="flex min-w-0 flex-1 flex-col overflow-hidden bg-[#303030]">
          <div className="h-[5px] shrink-0 border-b-2 border-[#181818] bg-[#232323]" />
          <div className="flex h-[6px] shrink-0 bg-[#686868]"><div className="w-1.5 rounded-l-full bg-[#2d8ceb]" /></div>
          <div className="flex h-[17px] shrink-0 items-end border-t-2 border-[#181818] bg-[#232323] text-[10px] text-[#adadad]">
            <div className="h-full w-[43px] shrink-0"><Fit className="w-[18px]">0:00f</Fit></div>
            {ticks.map((tick, i) => (
              <div key={i} className="flex h-full w-[73.9px] shrink-0 flex-col items-center justify-between">
                <Fit className={tick.length > 3 ? "w-[25px]" : "w-[13px]"}>{tick}</Fit>
                <div className="h-1 w-px shrink-0 bg-[#888]" />
              </div>
            ))}
          </div>
          <div className="flex h-[14px] shrink-0 border-t border-black bg-[#606060]"><div className="w-1.5 rounded-l-full bg-[#2d8ceb]" /></div>
          <div className="ml-1.5 h-[4px] shrink-0 border-y border-[#10330f] bg-[#12ad1e]" />
          <div className="ml-1.5 h-[14px] shrink-0 border-t border-[#e5ced6] bg-linear-to-b from-[#d5a9b7] to-[#c4849a]" />
          <div className="flex h-[17px] shrink-0 items-center border-t border-b border-[#2a2a2a] bg-[#353535]"><KeyMark /></div>
          <div className="flex h-[16px] shrink-0 items-center border-b border-[#2a2a2a] bg-[#353535]"><KeyMark /></div>
          <div className="ml-1.5 h-[16px] shrink-0 border-t border-b-2 border-[#464d78] bg-[#525b8f]" />
        </div>
      </div>

      {/* playhead */}
      <svg viewBox="0 0 14 126" className="absolute top-[29px] left-[491px] h-[126px] w-[14px]">
        <path d="M7 0v126" stroke="#2d8ceb" strokeWidth="1.5" />
        <path d="M1 12h12v4.500L7 24l-6-7.500z" fill="#2d8ceb" />
        <path d="M7 17v7" stroke="#174e88" />
      </svg>

      {/* callout around the camera layer */}
      <svg viewBox="0 511 1200 60" className="absolute top-[66px] left-0 h-[60px] w-[1200px]" fill="none" stroke="#f00" strokeWidth="2">
        <path d="M75.700 514H1200M75.700 566H1200" strokeDasharray="12 5.02" />
        <path d="M70 514h-6v6M64 526v11M64 543v11M64 560v6h6" />
        <path d="M13 535.500h24v-11L58.500 540 37 555.500v-10H13z" fill="#f00" stroke="none" />
      </svg>
    </section>
  );
}

export default function App() {
  return (
    <div className="flex h-[600px] w-[1200px] flex-col overflow-hidden bg-[#232323] font-['Open_Sans','Noto_Sans_CJK_JP',sans-serif]">
      <Toolbar />
      <div className="flex min-h-0 flex-1">
        <ProjectPanel />
        <CompositionPanel />
      </div>
      <Timeline />
    </div>
  );
}
